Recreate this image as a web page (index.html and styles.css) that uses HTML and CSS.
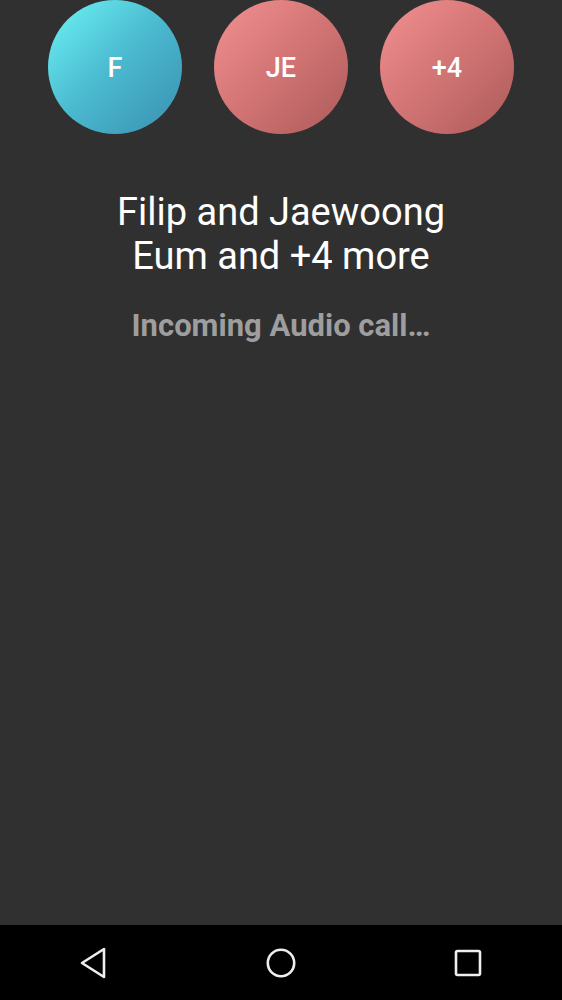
FILE: index.html
```html
<!DOCTYPE html>
<html>
<head>
<meta charset="utf-8">
<link rel="stylesheet" href="styles.css">
</head>
<body>
<div class="screen">
  <main class="call">
    <div class="avatars">
      <div class="avatar cyan">F</div>
      <div class="avatar red">JE</div>
      <div class="avatar red">+4</div>
    </div>
    <h1 class="name">Filip and Jaewoong<br>Eum and +4 more</h1>
    <p class="status">Incoming Audio call…</p>
  </main>
  <nav class="navbar">
    <svg class="nav-icon" width="30" height="34" viewBox="0 0 30 34"><path d="M25 3 L25 31 L3 17 Z" fill="none" stroke="#eee" stroke-width="2.6" stroke-linejoin="round"/></svg>
    <svg class="nav-icon" width="32" height="32" viewBox="0 0 32 32"><circle cx="16" cy="16" r="13.2" fill="none" stroke="#eee" stroke-width="2.6"/></svg>
    <svg class="nav-icon" width="30" height="30" viewBox="0 0 30 30"><rect x="3" y="3" width="24" height="24" rx="1.5" fill="none" stroke="#eee" stroke-width="2.6"/></svg>
  </nav>
</div>
</body>
</html>
```

FILE: styles.css
```css
* { box-sizing: border-box; }
html, body {
  margin: 0;
  padding: 0;
  background: #303030;
}
.screen {
  width: 562px;
  height: 1000px;
  display: flex;
  flex-direction: column;
  font-family: Roboto, "Liberation Sans", sans-serif;
}
.call {
  flex: 1;
  display: flex;
  flex-direction: column;
  align-items: center;
}
.avatars {
  display: flex;
  gap: 32px;
}
.avatar {
  width: 134px;
  height: 134px;
  border-radius: 50%;
  display: flex;
  align-items: center;
  justify-content: center;
  color: #fff;
  font-size: 27px;
  font-weight: 500;
  padding-top: 2px;
}
.cyan {
  background: linear-gradient(135deg, #6cf4f6 0%, #4ab9cf 50%, #3a8fb0 100%);
}
.red {
  background: linear-gradient(135deg, #f39090 0%, #d27474 50%, #ac5a5a 100%);
}
.name {
  margin: 56px 0 0;
  font-size: 38px;
  line-height: 44px;
  font-weight: 400;
  color: #fff;
  text-align: center;
}
.status {
  margin: 30px 0 0;
  font-size: 31px;
  line-height: 36px;
  font-weight: 700;
  color: #9e9e9e;
  text-align: center;
}
.navbar {
  height: 75px;
  background: #000;
  display: grid;
  grid-template-columns: repeat(3, 1fr);
  align-items: center;
  justify-items: center;
}
.nav-icon { display: block; }
```
